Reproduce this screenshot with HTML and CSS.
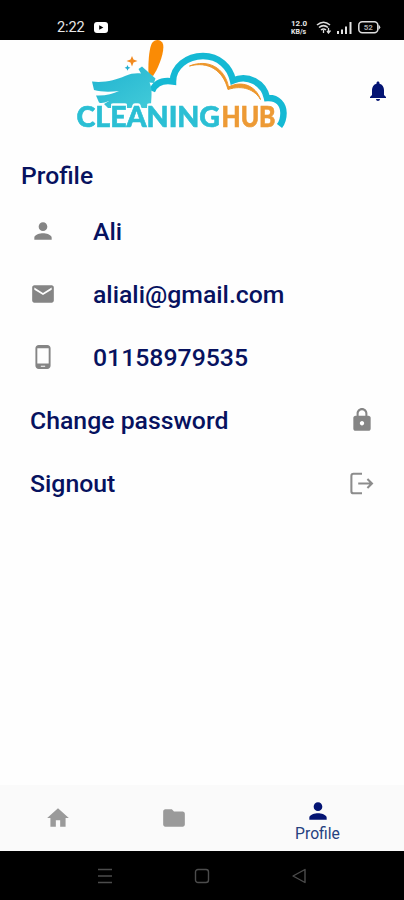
FILE: index.html
```
<!DOCTYPE html>
<html lang="en">
<head>
<meta charset="utf-8">
<title>Profile</title>
<link rel="stylesheet" href="styles.css">
</head>
<body>
<div class="status">
  <span class="clock">2:22</span>
  <svg class="yt" width="14" height="11" viewBox="0 0 14 11"><rect width="14" height="11" rx="3" fill="#fff"/><path d="M5.2 3.2v4.6L9.4 5.500z" fill="#000"/></svg>
  <span class="speed"><b>12.0</b><b>KB/s</b></span>
  <svg class="wifi" width="16" height="13" viewBox="0 0 16 13" fill="none" stroke="#ddd" stroke-width="1.6"><path d="M1 4Q7.500-1.500 14 4M3 6.500Q7.500 2.700 12 6.500M5 9Q7.500 7 10 9"/><path d="M7.500 9v3M12.500 7v5M11 10l1.500 2L14.500 9.500" stroke-width="1.300"/></svg>
  <svg class="signal" width="15" height="12" viewBox="0 0 15 12" fill="#e4e4e4"><path d="M0 9h2v3H0zM4 7.500h2V12H4zM8 4.500h2V12H8zM12.500 0h2v12h-2z"/></svg>
  <svg class="battery" width="23" height="13" viewBox="0 0 23 13"><rect x=".8" y=".8" width="19" height="11" rx="3.500" fill="none" stroke="#ddd" stroke-width="1.500"/><path d="M20.500 3.500Q24 6.300 20.500 9z" fill="#ddd"/><text x="10.300" y="9.200" text-anchor="middle">52</text></svg>
</div>
<header class="header">
  <svg class="logo" width="220" height="92" viewBox="72 40 220 92">
    <defs><linearGradient id="brush" x2="1" y2="1"><stop stop-color="#20b3d0"/><stop offset="1" stop-color="#43cbd9"/></linearGradient></defs>
    <path d="M152 91Q157 79 173 81.500C173 67 187 56 203 56C219 56 230 67 233 80.500C248 74 264 83 267 98C278 97 283.500 105 283.500 113Q283.500 121 279.500 126" fill="none" stroke="#15b9d4" stroke-width="6.500"/>
    <path d="M189.500 66C208 58.500 225 68 228.500 87C242 80 256 86 260.500 99.500C255 90 243 84.500 228 89.500C223 70 208 61 189.500 66z" fill="#ed962b" stroke="#ed962b"/>
    <path d="M148.500 74C148 64 149 48 152 43C155 39 161 39 163 44C165 52 158 69 153 76z" fill="#fa8b05"/>
    <path d="M92 81.500C104 83 116 80 125 76C131 73.500 136 73 141 73.500L138.500 69L142 66.500L155.500 78.500L154 83L149.500 82.500C153 90 151 98 151 108H108L104 104L109 101Q102 104 99 102.500L96 95.500C105 96 113 94 119 91C110 92 101 92 94 90z" fill="url(#brush)"/>
    <path d="M132 56l1.500 3.500 4 1.500-4 1.500-1.500 4-1.500-4-4-1.500 4-1.500z" fill="#f28a20"/><path d="M127.500 65l.9 2 2 .8-2 .9-.9 2-.9-2-2-.9 2-.8z" fill="#20aed0"/>
    <text class="word clean" x="76.500" y="126.700" textLength="143.500" lengthAdjust="spacingAndGlyphs">CLEANING</text>
    <text class="word hub" x="221.500" y="126.700" textLength="54" lengthAdjust="spacingAndGlyphs">HUB</text>
  </svg>
  <svg class="bell" width="24" height="24" viewBox="0 0 24 24"><path d="M12 22c1.100 0 2-.9 2-2h-4c0 1.100.9 2 2 2zm6-6v-5c0-3.070-1.640-5.640-4.500-6.320V4c0-.83-.67-1.500-1.500-1.500s-1.500.67-1.500 1.500v.68C7.630 5.360 6 7.920 6 11v5l-2 2v1h16v-1l-2-2z"/></svg>
</header>
<main class="main">
  <h1 class="title">Profile</h1>
  <div class="row"><svg class="icon" viewBox="0 0 24 24"><path d="M12 12c2.210 0 4-1.790 4-4s-1.790-4-4-4-4 1.790-4 4 1.790 4 4 4zm0 2c-2.670 0-8 1.340-8 4v2h16v-2c0-2.660-5.330-4-8-4z"/></svg><span class="name">Ali</span></div>
  <div class="row"><svg class="icon" viewBox="0 0 24 24"><path d="M20 4H4c-1.100 0-1.990.9-1.990 2L2 18c0 1.100.9 2 2 2h16c1.100 0 2-.9 2-2V6c0-1.100-.9-2-2-2zm0 4l-8 5-8-5V6l8 5 8-5v2z"/></svg><span class="mail">aliali@gmail.com</span></div>
  <div class="row"><svg class="icon" viewBox="0 0 24 24"><path d="M16 1H8C6.340 1 5 2.340 5 4v16c0 1.660 1.340 3 3 3h8c1.660 0 3-1.340 3-3V4c0-1.660-1.340-3-3-3zm-2 20h-4v-1h4v1zm3.250-3H6.750V4h10.500v14z"/></svg><span class="phone">01158979535</span></div>
  <div class="row action"><span class="change">Change password</span><svg class="icon" viewBox="0 0 24 24"><path d="M18 8h-1V6c0-2.760-2.240-5-5-5S7 3.240 7 6v2H6c-1.100 0-2 .9-2 2v10c0 1.100.9 2 2 2h12c1.100 0 2-.9 2-2V10c0-1.100-.9-2-2-2zm-6 9c-1.100 0-2-.9-2-2s.9-2 2-2 2 .9 2 2-.9 2-2 2zm3.100-9H8.900V6c0-1.710 1.390-3.100 3.100-3.100 1.710 0 3.100 1.390 3.100 3.100v2z"/></svg></div>
  <div class="row action"><span class="signout">Signout</span><svg class="icon" viewBox="0 0 24 24"><path class="line" d="M12 3.500H4.200Q2.200 3.500 2.200 5.500V19.500Q2.200 21.500 4.200 21.500H12M8.500 12.500H21M17 8.300L21.200 12.500L17 16.700"/></svg></div>
</main>
<nav class="tabs">
  <div class="tab home"><svg class="icon" viewBox="0 0 24 24"><path d="M10 20v-6h4v6h5v-8h3L12 3 2 12h3v8z"/></svg></div>
  <div class="tab folder"><svg class="icon" viewBox="0 0 24 24"><path d="M10 4H4c-1.100 0-1.990.9-1.990 2L2 18c0 1.100.9 2 2 2h16c1.100 0 2-.9 2-2V8c0-1.100-.9-2-2-2h-8l-2-2z"/></svg></div>
  <div class="tab active"><svg class="icon" viewBox="0 0 24 24"><path d="M12 12c2.210 0 4-1.790 4-4s-1.790-4-4-4-4 1.790-4 4 1.790 4 4 4zm0 2c-2.670 0-8 1.340-8 4v2h16v-2c0-2.660-5.330-4-8-4z"/></svg><span>Profile</span></div>
</nav>
<div class="system">
  <svg width="16" height="16" viewBox="0 0 16 16"><path d="M1 1.500h14M1 8h14M1 14.500h14"/></svg>
  <svg width="16" height="16" viewBox="0 0 16 16"><rect x="1.500" y="1.500" width="13" height="13" rx="2.500"/></svg>
  <svg width="16" height="16" viewBox="0 0 16 16"><path d="M14 1.500L2 8l12 6.500z" stroke-linejoin="round"/></svg>
</div>
</body>
</html>
```
FILE: styles.css
```
* { box-sizing: border-box; }
body { margin: 0; width: 404px; height: 900px; display: flex; flex-direction: column; background: #fefefe; font-family: Roboto, sans-serif; color: #07125f; overflow: hidden; }
svg { display: block; flex: none; }
.status { height: 40px; background: #000; display: flex; align-items: center; padding: 15px 0 0 57px; color: #e8e8e8; }
.clock { width: 37px; font-size: 14.500px; line-height: 16px; letter-spacing: -.1px; }
.speed { margin-left: 183px; width: 25px; display: flex; flex-direction: column; font-size: 8px; line-height: 8px; }
.speed b + b { font-size: 7px; }
.signal { margin-left: 5px; }
.battery { margin-left: 6px; }
.battery text { font: 700 8px Roboto, sans-serif; fill: #aaa; }
.header { height: 92px; display: flex; padding-left: 72px; }
.word { font: 900 27.500px Lato, sans-serif; stroke-width: .6px; filter: drop-shadow(1px 0 0 #fff) drop-shadow(-1px 0 0 #fff) drop-shadow(0 -1.500px 0 #fff); }
.clean { fill: #2bbfd4; stroke: #2bbfd4; }
.hub { fill: #ed9a35; stroke: #ed9a35; }
.bell { margin: 39px 0 0 74px; fill: #041473; }
.main { flex: 1; padding-top: 28px; }
.title { margin: 0 0 7px 21px; font-size: 24.700px; line-height: 32px; font-weight: 500; }
.row { height: 63px; display: flex; align-items: center; padding: 0 30px; font-size: 24.800px; font-weight: 500; }
.row span { padding-top: 1px; }
.row .icon { width: 26px; height: 26px; margin-right: 37px; fill: #858585; }
.action { justify-content: space-between; padding-right: 29px; }
.action .icon { margin-right: 0; }
.icon .line { fill: none; stroke: #8c8c8c; stroke-width: 1.900; }
.tabs { height: 66px; display: flex; background: #fafafa; }
.tab { display: flex; flex-direction: column; align-items: center; justify-content: center; }
.home { width: 116px; }
.folder { width: 115px; }
.active { width: 173px; padding-top: 4px; font-size: 15.700px; line-height: 19px; color: #26417f; }
.tab .icon { width: 26px; height: 26px; fill: #9a9a9a; }
.active .icon { fill: #041473; }
.system { height: 49px; background: #000; display: flex; justify-content: center; gap: 81px; padding: 17px 0 0; }
.system svg { fill: none; stroke: #4c4c4c; stroke-width: 1.400; }
```
